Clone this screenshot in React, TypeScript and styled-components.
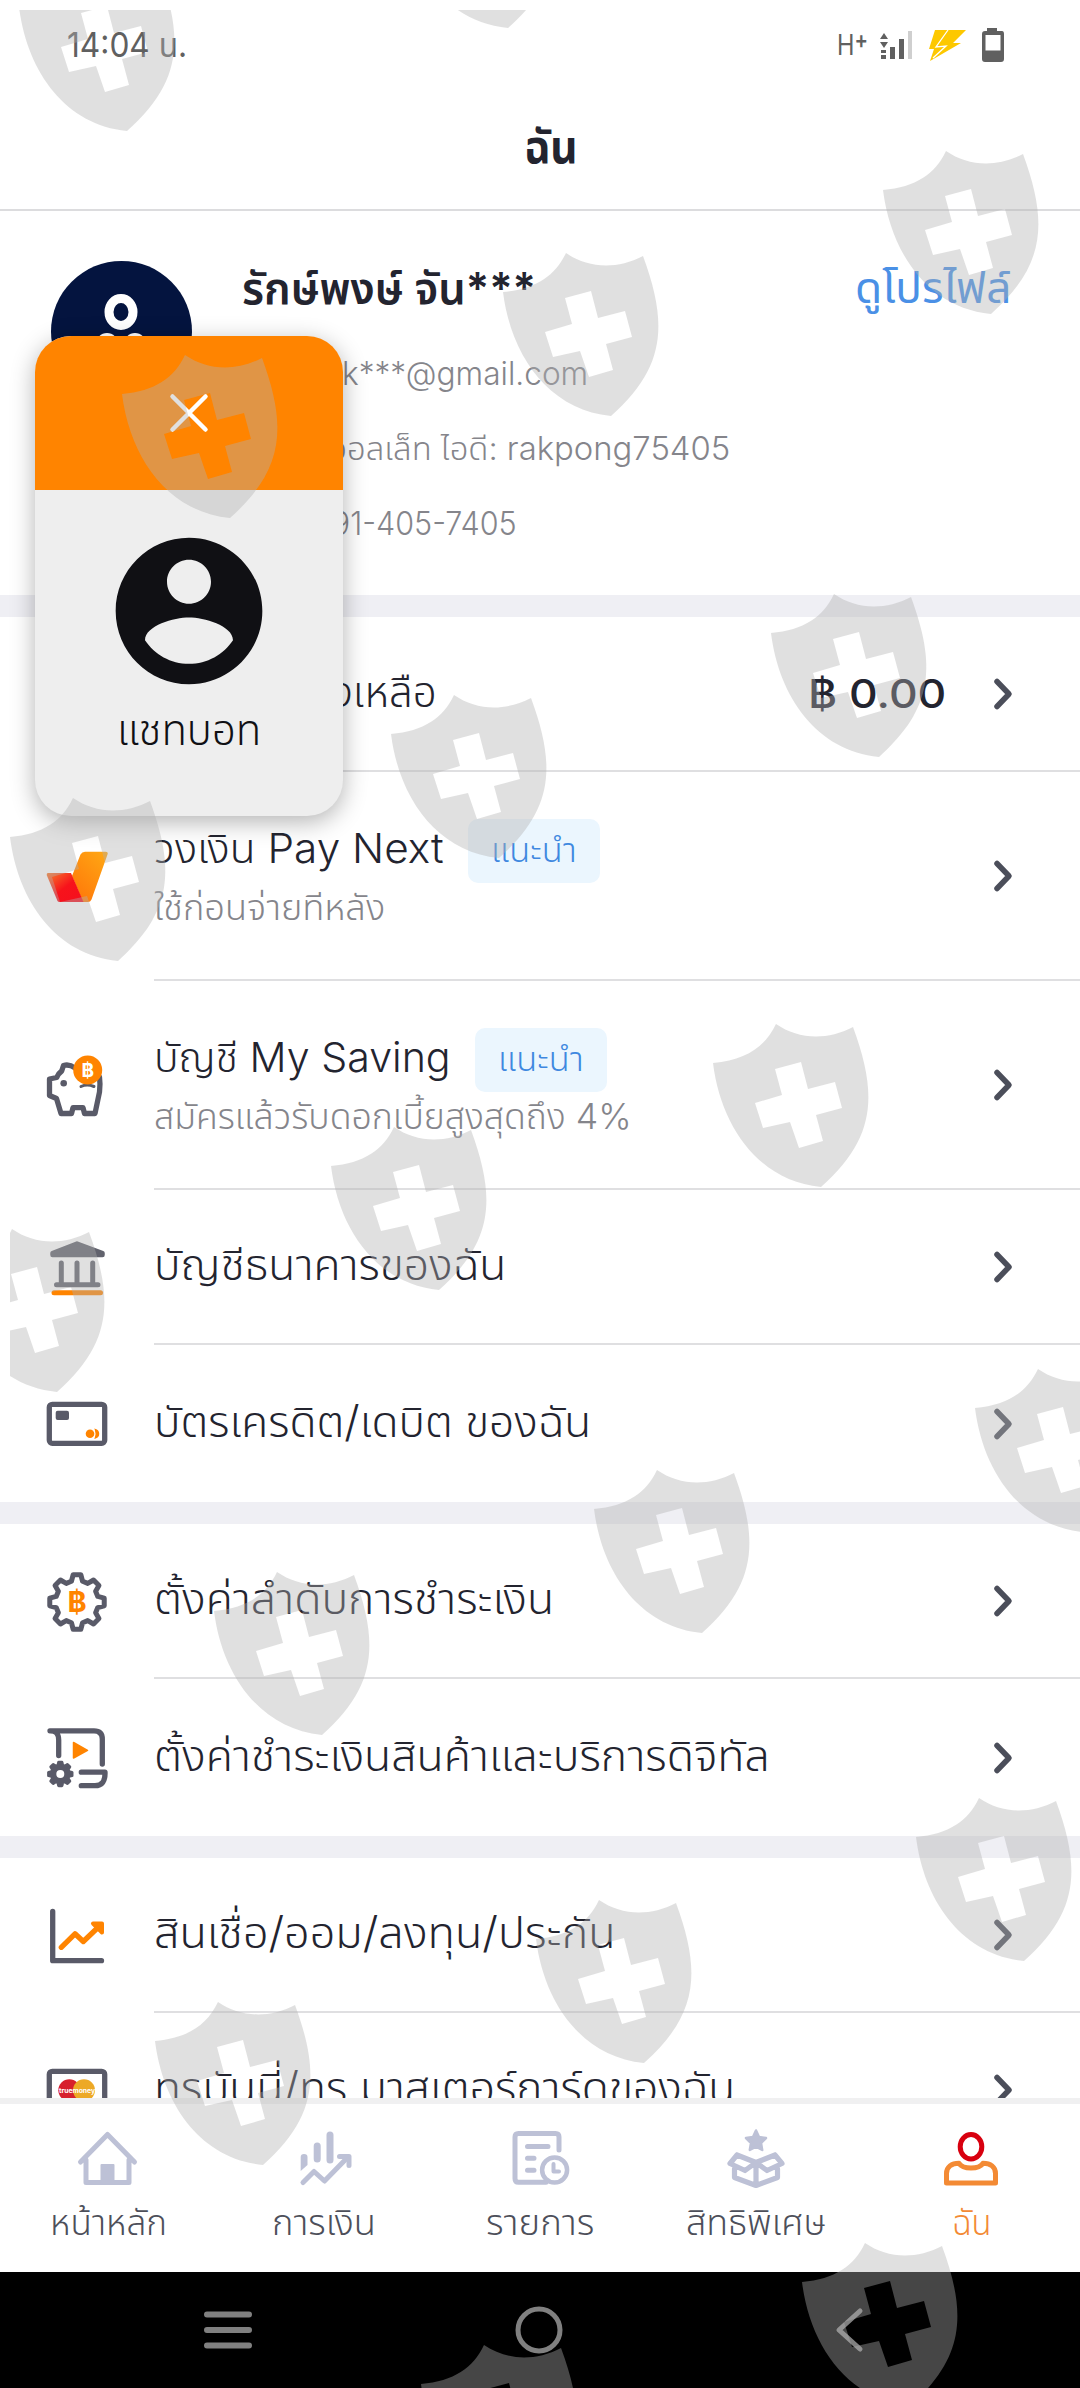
import React, { useLayoutEffect, useRef, useState } from "react";
import styled, { createGlobalStyle } from "styled-components";

const FONT = `Inter, "Noto Sans Thai", "Noto Sans", "Liberation Sans", sans-serif`;
const SLATE = "#595a68";
const ORANGE = "#ff8400";
const MUTED = "#bdc1d6";

const Global = createGlobalStyle`
  * { box-sizing: border-box; }
  body { margin: 0; background: #fff; font-family: ${FONT}; }
`;

const Screen = styled.div`
  position: relative;
  width: 1080px;
  height: 2388px;
  overflow: hidden;
  display: flex;
  flex-direction: column;
  background: #fff;
`;

/* ---------- text fitted to a fixed measure ---------- */

const FitBox = styled.span<{ $w: number; $size: number; $weight: number; $color: string }>`
  display: block;
  flex: none;
  width: ${(p) => p.$w}px;
  font-size: ${(p) => p.$size}px;
  font-weight: ${(p) => p.$weight};
  line-height: ${(p) => Math.round(p.$size * 1.4)}px;
  color: ${(p) => p.$color};
  white-space: nowrap;
`;

const FitInner = styled.span`
  display: inline-block;
  transform-origin: 0 50%;
`;

interface FitProps {
  w: number;
  size: number;
  weight?: number;
  color?: string;
  children: React.ReactNode;
}

function Fit({ w, size, weight = 300, color = "#23242f", children }: FitProps) {
  const ref = useRef<HTMLSpanElement>(null);
  const [scale, setScale] = useState(1);
  useLayoutEffect(() => {
    if (ref.current && ref.current.offsetWidth) setScale(w / ref.current.offsetWidth);
  }, [w, children]);
  return (
    <FitBox $w={w} $size={size} $weight={weight} $color={color}>
      <FitInner ref={ref} style={{ transform: `scaleX(${scale})` }}>
        {children}
      </FitInner>
    </FitBox>
  );
}

/* ---------- header ---------- */

const StatusBar = styled.div`
  flex: none;
  height: 90px;
  padding: 0 75px 0 67px;
  display: flex;
  justify-content: space-between;
  align-items: center;
`;

const StatusIcons = styled.div`
  display: flex;
  align-items: center;
  gap: 11px;
`;

const Plus = styled.span`
  font-size: 24px;
  font-weight: 600;
  line-height: 1;
  vertical-align: 7px;
`;

const TitleBar = styled.header`
  flex: none;
  height: 121px;
  padding: 0 0 8px 22px;
  border-bottom: 2px solid #dcdcde;
  display: flex;
  justify-content: center;
  align-items: center;
`;

const Profile = styled.section`
  flex: none;
  height: 384px;
  padding: 50px 69px 0 51px;
  display: flex;
`;

const Avatar = styled.svg`
  flex: none;
  width: 141px;
  height: 141px;
`;

const ProfileText = styled.div`
  flex: 1;
  margin-left: 50px;
  display: flex;
  flex-direction: column;
`;

const NameRow = styled.div`
  display: flex;
  justify-content: space-between;
  height: 94px;
  margin-top: -4px;
`;

const Detail = styled.div<{ $indent: number }>`
  height: 75px;
  padding-left: ${(p) => p.$indent}px;
`;

const Band = styled.div`
  flex: none;
  height: 22px;
  background: #efeff4;
`;

/* ---------- list ---------- */

const List = styled.main`
  flex: none;
  height: 1503px;
  overflow: hidden;
`;

const Row = styled.div<{ $h: number }>`
  height: ${(p) => p.$h}px;
  display: flex;
`;

const IconCell = styled.div`
  width: 154px;
  padding-left: 45px;
  display: flex;
  align-items: center;
  svg { width: 64px; height: 64px; }
`;

const RowBody = styled.div<{ $line: boolean }>`
  flex: 1;
  display: flex;
  align-items: center;
  padding-right: 64px;
  border-bottom: ${(p) => (p.$line ? "2px solid #dfdfe1" : "0")};
`;

const RowText = styled.div<{ $indent?: number }>`
  flex: 1;
  padding: 0 0 6px ${(p) => p.$indent ?? 0}px;
`;

const Heading = styled.div`
  display: flex;
  align-items: center;
  gap: 24px;
  height: 64px;
`;

const HeadingText = styled.div`
  padding-bottom: 5px;
`;

const Badge = styled.span`
  height: 64px;
  padding: 0 23px 2px;
  display: flex;
  align-items: center;
  border-radius: 10px;
  background: #ebf6fe;
`;

const TwoLine = styled.div`
  flex: 1;
  height: 114px;
`;

const Amount = styled.div`
  margin-right: 46px;
`;

const ChevronSvg = styled.svg`
  flex: none;
  width: 24px;
  height: 36px;
`;

const Chevron = () => (
  <ChevronSvg viewBox="0 0 24 36" fill="none" stroke="#4b4e5a" strokeWidth="5.5" strokeLinecap="round" strokeLinejoin="round">
    <path d="M5 5.5 17 18 5 30.5" />
  </ChevronSvg>
);

/* ---------- row icons ---------- */

const gearPath = (c: number, cy: number, outer: number, inner: number) => {
  const pts: string[] = [];
  for (let i = 0; i < 8; i++) {
    const base = (i * 45 * Math.PI) / 180;
    [[-8, outer], [8, outer], [15, inner], [30, inner]].forEach(([deg, r]) => {
      const a = base + (deg * Math.PI) / 180;
      pts.push(`${(c + r * Math.sin(a)).toFixed(2)} ${(cy - r * Math.cos(a)).toFixed(2)}`);
    });
  }
  return `M${pts.join("L")}Z`;
};

const PayNextIcon = () => (
  <svg viewBox="0 0 64 64">
    <defs>
      <linearGradient id="pn1" x1="0" y1="0" x2="1" y2="1">
        <stop offset="0" stopColor="#f77b2a" />
        <stop offset="0.5" stopColor="#f7131b" />
        <stop offset="1" stopColor="#f50f1e" />
      </linearGradient>
      <linearGradient id="pn2" x1="1" y1="0" x2="0.3" y2="1">
        <stop offset="0" stopColor="#ffa914" />
        <stop offset="1" stopColor="#ff7a0a" />
      </linearGradient>
    </defs>
    <path d="M40 6.700H60.500Q63.500 7 62.500 9.500L46.500 54.500Q45.300 57 43 57H38L27 31 35.500 9.500Q37 6.700 40 6.700Z" fill="url(#pn2)" />
    <path d="M3 28H26L38.500 57H14.500Q13 57 12.500 56L1.700 30Q1.500 28 3 28Z" fill="url(#pn1)" />
  </svg>
);

const PiggyIcon = () => (
  <svg viewBox="0 0 64 64" fill="none" stroke={SLATE} strokeWidth="5.300" strokeLinecap="round" strokeLinejoin="round">
    <path d="M30 14C26 11 22 10.500 18.500 11.500L16.700 17C14 19 13 20 11.700 23.500L4.500 25V41.500L11.500 44.500 16 59.500H26.500L28 53.700H38L39.500 59.500H50L54.500 38Q55.500 30 54.500 23" />
    <circle cx="18.700" cy="29.300" r="3.300" fill={SLATE} stroke="none" />
    <path d="M36 32.500Q42 29.500 49 32.500" strokeWidth="3" />
    <circle cx="42.700" cy="16" r="14.500" fill={ORANGE} stroke="none" />
    <text x="42.700" y="23" fontSize="19" fontWeight="700" textAnchor="middle" fill="#fff" stroke="none">฿</text>
  </svg>
);

const BankIcon = () => (
  <svg viewBox="0 0 64 64" fill="none" stroke="#61626d" strokeWidth="5" strokeLinecap="round" strokeLinejoin="round">
    <path d="M32 7.500 57.500 17V19H7.500V17Z" fill="#61626d" strokeWidth="4.500" />
    <path d="M16.300 27V46M32 27V46M47.700 27V46M11.500 48.700H53" />
    <path d="M9 56.700H55.500" stroke={ORANGE} />
  </svg>
);

const CardIcon = () => (
  <svg viewBox="0 0 64 64" fill="none">
    <rect x="4.300" y="12.300" width="55.400" height="39" rx="3" stroke={SLATE} strokeWidth="5.300" />
    <rect x="10.700" y="18.700" width="13.300" height="9.300" rx="2" fill={SLATE} />
    <circle cx="45" cy="41.700" r="4.300" fill={ORANGE} />
    <path d="M50.500 37.600A4.300 4.300 0 0 1 50.500 45.800Q52 41.700 50.500 37.600Z" fill={ORANGE} stroke={ORANGE} strokeWidth="1.500" />
  </svg>
);

const GearIcon = () => (
  <svg viewBox="0 0 64 64">
    <path d={gearPath(32, 32, 27.5, 21.5)} fill="none" stroke={SLATE} strokeWidth="5" strokeLinejoin="round" />
    <text x="32" y="42" fontSize="29" fontWeight="700" textAnchor="middle" fill={ORANGE}>฿</text>
  </svg>
);

const DigitalIcon = () => (
  <svg viewBox="0 0 64 64" fill="none" stroke={SLATE} strokeWidth="5.300" strokeLinecap="round" strokeLinejoin="round">
    <path d="M5 4.800H49Q57.300 4.800 57.300 13V38M5 4.800Q13.700 4.500 13.700 14V29.500" />
    <path d="M36.300 46.200H60Q60.500 59.700 50 59.700H36.300" />
    <path d="M28.500 16.500 42.500 24.300 28.500 32Z" fill={ORANGE} stroke={ORANGE} strokeWidth="1.500" />
    <path d={gearPath(15.3, 48, 11.8, 9)} fill={SLATE} strokeWidth="3" />
    <circle cx="15.300" cy="48" r="4" fill="#fff" stroke="none" />
  </svg>
);

const ChartIcon = () => (
  <svg viewBox="0 0 64 64" fill="none" stroke={SLATE} strokeWidth="5.300" strokeLinecap="round" strokeLinejoin="round">
    <path d="M7.700 7.500V56.700H56.500" />
    <path d="M16.300 43.300 30 29.800 38.300 37.500 54 22.500" stroke={ORANGE} />
    <path d="M48 19.500H57V28.500Z" fill={ORANGE} stroke={ORANGE} strokeWidth="4" />
  </svg>
);

const MasterIcon = () => (
  <svg viewBox="0 0 64 64" fill="none">
    <rect x="4.300" y="12.300" width="55.400" height="39" rx="3" stroke={SLATE} strokeWidth="5.300" />
    <circle cx="24.300" cy="31.300" r="11" fill="#d7202c" />
    <circle cx="39" cy="31.300" r="11" fill="#eda926" />
    <text x="32" y="34" fontSize="6.800" fontWeight="700" textAnchor="middle" fill="#fff">truemoney</text>
  </svg>
);

/* ---------- tab bar ---------- */

const TabBar = styled.nav`
  flex: none;
  height: 174px;
  border-top: 6px solid #f0f0f1;
  display: grid;
  grid-template-columns: repeat(5, 216px);
`;

const Tab = styled.div`
  padding-top: 22px;
  display: flex;
  flex-direction: column;
  align-items: center;
  gap: 7px;
  svg { width: 64px; height: 64px; fill: none; stroke: ${MUTED}; stroke-width: 5; stroke-linecap: round; stroke-linejoin: round; }
`;

const HomeIcon = () => (
  <svg viewBox="0 0 64 64">
    <path d="M4.500 36 31.500 8.500 58.500 36M10 34V56.500H53V34" strokeWidth="5" />
    <rect x="25.500" y="39" width="12" height="17" fill={MUTED} strokeWidth="2" />
  </svg>
);

const FinanceIcon = () => (
  <svg viewBox="0 0 64 64">
    <path d="M25.200 20V33M38 9V34" strokeWidth="7" />
    <path d="M8.700 45V31Q8.700 28 12 28Q15.500 28 15.500 31V39Z" fill={MUTED} stroke="none" />
    <path d="M11 56.500 22 45.500 32.500 55 55 32" />
    <path d="M47.500 30.500H57V39.500" />
  </svg>
);

const HistoryIcon = () => (
  <svg viewBox="0 0 64 64">
    <path d="M51 24V11Q51 7.500 47.500 7.500H10.500Q7 7.500 7 11V52.500Q7 56.300 10.500 56.300H38" />
    <path d="M19.500 20.500H40M19.500 32.300H26M19.500 44.300H26" />
    <circle cx="46.600" cy="44" r="12.500" fill="#fff" strokeWidth="4.500" />
    <path d="M45.500 38V45.500H51" strokeWidth="4" />
  </svg>
);

const GiftIcon = () => (
  <svg viewBox="0 0 64 64">
    <path d="M32 4.500 35 11 42 12 37 17 38.200 24 32 20.700 25.800 24 27 17 22 12 29 11Z" fill={MUTED} strokeWidth="2.500" />
    <path d="M13 29 6 37.500 21 44.500 32 36.500 43 44.500 58 37.500 51 29M13 29 32 36.500 51 29M10.500 43V51.500L32 59.500 53.500 51.500V43M32 38V59" strokeWidth="5.200" />
  </svg>
);

const MeIcon = () => (
  <svg viewBox="0 0 64 64">
    <ellipse cx="31" cy="20.700" rx="10.800" ry="12.200" stroke="#d8000f" />
    <path d="M6.500 57V47.500C6.500 41 11.500 37.300 19 37.300C23 43.500 39 43.500 43 37.300C50.500 37.300 55.500 41 55.500 47.500V57Z" stroke="#f38a34" />
  </svg>
);

/* ---------- system navigation ---------- */

const SystemNav = styled.div`
  flex: none;
  height: 116px;
  background: #000;
  display: flex;
  align-items: center;
  justify-content: space-between;
  padding: 0 206px 0 204px;
  svg { width: 48px; height: 48px; fill: none; stroke: #808080; stroke-width: 5; stroke-linecap: round; stroke-linejoin: round; }
`;

/* ---------- floating chat card ---------- */

const ChatCard = styled.aside`
  position: absolute;
  left: 35px;
  top: 336px;
  width: 308px;
  height: 480px;
  border-radius: 36px;
  overflow: hidden;
  background: #eee;
  box-shadow: 0 6px 24px rgba(0, 0, 0, 0.3);
  display: flex;
  flex-direction: column;
`;

const ChatHead = styled.div`
  height: 154px;
  background: ${ORANGE};
  display: flex;
  align-items: center;
  justify-content: center;
`;

const ChatBody = styled.div`
  flex: 1;
  padding-top: 33px;
  display: flex;
  flex-direction: column;
  align-items: center;
`;

/* ---------- shield overlay ---------- */

const Overlay = styled.svg`
  position: absolute;
  left: 10px;
  top: 10px;
  width: 1070px;
  height: 2378px;
  pointer-events: none;
`;

const SHIELD =
  "M0 40C33 37 52 24 63 1C85 16 113 18 140 4C165 72 163 115 108 164C46 158 8 104 0 40Z" +
  "M62 46 88 39 95 66 122 59 129 85 103 92 110 118 86 125 77 99 50 105 42 80 69 72Z";

const SHIELD_TIPS: [number, number][] = [
  [127, 131], [508, 28], [991, 314], [611, 416], [230, 518], [879, 757], [499, 858], [118, 961],
  [821, 1187], [439, 1290], [57, 1392], [1083, 1532], [702, 1633], [322, 1735], [1024, 1961],
  [644, 2063], [263, 2165], [910, 2406], [529, 2508],
];

const GREY = "#85858b";

interface SimpleRow {
  icon: React.ReactNode;
  text: string;
  w: number;
  h: number;
  line: boolean;
}

const LineRow = ({ icon, text, w, h, line }: SimpleRow) => (
  <Row $h={h}>
    <IconCell>{icon}</IconCell>
    <RowBody $line={line}>
      <RowText><Fit w={w} size={43}>{text}</Fit></RowText>
      <Chevron />
    </RowBody>
  </Row>
);

interface PromoRow {
  icon: React.ReactNode;
  title: string;
  tw: number;
  sub: string;
  sw: number;
  h: number;
}

const PromoLine = ({ icon, title, tw, sub, sw, h }: PromoRow) => (
  <Row $h={h}>
    <IconCell>{icon}</IconCell>
    <RowBody $line>
      <TwoLine>
        <Heading>
          <HeadingText><Fit w={tw} size={41}>{title}</Fit></HeadingText>
          <Badge><Fit w={86} size={34} color="#3f88e0">แนะนำ</Fit></Badge>
        </Heading>
        <Fit w={sw} size={35} color={GREY}>{sub}</Fit>
      </TwoLine>
      <Chevron />
    </RowBody>
  </Row>
);

const TABS = [
  { icon: <HomeIcon />, label: "หน้าหลัก", w: 117, color: "#4d4f5a" },
  { icon: <FinanceIcon />, label: "การเงิน", w: 104, color: "#4d4f5a" },
  { icon: <HistoryIcon />, label: "รายการ", w: 108, color: "#4d4f5a" },
  { icon: <GiftIcon />, label: "สิทธิพิเศษ", w: 140, color: "#4d4f5a" },
  { icon: <MeIcon />, label: "ฉัน", w: 40, color: "#f38a34" },
];

export default function App() {
  return (
    <Screen>
      <Global />
      <StatusBar>
        <Fit w={120} size={34} weight={400} color="#606060">14:04 น.</Fit>
        <StatusIcons>
          <Fit w={31} size={28} weight={400} color="#606060">H<Plus>+</Plus></Fit>
          <svg width="36" height="34" viewBox="0 0 36 34" fill="#606060">
            <path d="M1 11 5 5 9 11ZM1 14H9L5 20Z" />
            <path d="M2 22H7V25H2ZM2 27H7V31H2ZM11 19H16V31H11ZM20 11H25V31H20Z" />
            <path d="M29 3H33V31H29Z" fill="#cfcfcf" />
          </svg>
          <svg width="42" height="36" viewBox="0 0 42 36">
            <path d="M9 3H40L27 16H35L4 34 8 22H3Z" fill="#fdc800" />
            <path d="M22 3 10 20 20 19 7 31" stroke="#fff" strokeWidth="1.300" fill="none" />
          </svg>
          <svg width="26" height="38" viewBox="0 0 26 38">
            <path d="M8 2H18V5H23Q25 5 25 8V33Q25 36 22 36H6Q3 36 3 33V8Q3 5 6 5H8Z" fill="#606060" />
            <path d="M6.500 9H21.500V24.500H6.500Z" fill="#fff" />
          </svg>
        </StatusIcons>
      </StatusBar>

      <TitleBar><Fit w={54} size={47} weight={700}>ฉัน</Fit></TitleBar>

      <Profile>
        <Avatar viewBox="0 0 141 141">
          <circle cx="70.500" cy="70.500" r="70.500" fill="#04143f" />
          <ellipse cx="70" cy="51" rx="12" ry="13.500" fill="none" stroke="#fff" strokeWidth="9" />
          <circle cx="56" cy="83" r="11" fill="#fff" />
          <circle cx="84" cy="83" r="11" fill="#fff" />
        </Avatar>
        <ProfileText>
          <NameRow>
            <Fit w={294} size={44} weight={600}>รักษ์พงษ์ จัน***</Fit>
            <Fit w={156} size={43} weight={400} color="#4a90e6">ดูโปรไฟล์</Fit>
          </NameRow>
          <Detail $indent={100}><Fit w={246} size={32} color={GREY}>k***@gmail.com</Fit></Detail>
          <Detail $indent={89}><Fit w={399} size={32} color={GREY}>วอลเล็ท ไอดี: rakpong75405</Fit></Detail>
          <Detail $indent={71}><Fit w={204} size={32} color={GREY}>091-405-7405</Fit></Detail>
        </ProfileText>
      </Profile>

      <List>
        <Band />
        <Row $h={155}>
          <IconCell />
          <RowBody $line>
            <RowText $indent={151}><Fit w={132} size={43}>คงเหลือ</Fit></RowText>
            <Amount><Fit w={138} size={39} weight={500}>฿ 0.00</Fit></Amount>
            <Chevron />
          </RowBody>
        </Row>
        <PromoLine icon={<PayNextIcon />} title="วงเงิน Pay Next" tw={290} sub="ใช้ก่อนจ่ายทีหลัง" sw={231} h={209} />
        <PromoLine icon={<PiggyIcon />} title="บัญชี My Saving" tw={297} sub="สมัครแล้วรับดอกเบี้ยสูงสุดถึง 4%" sw={478} h={209} />
        <LineRow icon={<BankIcon />} text="บัญชีธนาคารของฉัน" w={352} h={155} line />
        <LineRow icon={<CardIcon />} text="บัตรเครดิต/เดบิต ของฉัน" w={437} h={157} line={false} />
        <Band />
        <LineRow icon={<GearIcon />} text="ตั้งค่าลำดับการชำระเงิน" w={400} h={155} line />
        <LineRow icon={<DigitalIcon />} text="ตั้งค่าชำระเงินสินค้าและบริการดิจิทัล" w={616} h={157} line={false} />
        <Band />
        <LineRow icon={<ChartIcon />} text="สินเชื่อ/ออม/ลงทุน/ประกัน" w={462} h={155} line />
        <LineRow icon={<MasterIcon />} text="ทรูมันนี่/ทรู มาสเตอร์การ์ดของฉัน" w={581} h={155} line />
      </List>

      <TabBar>
        {TABS.map((t) => (
          <Tab key={t.label}>
            {t.icon}
            <Fit w={t.w} size={36} color={t.color}>{t.label}</Fit>
          </Tab>
        ))}
      </TabBar>

      <SystemNav>
        <svg viewBox="0 0 48 48"><path d="M3 8.500H45M3 24H45M3 39.500H45" strokeWidth="6" /></svg>
        <svg viewBox="0 0 48 48"><circle cx="24" cy="24" r="21" /></svg>
        <svg viewBox="0 0 48 48"><path d="M34 5 13 24 34 43" /></svg>
      </SystemNav>

      <ChatCard>
        <ChatHead>
          <svg width="40" height="40" viewBox="0 0 40 40" stroke="#fff" strokeWidth="4.500" strokeLinecap="round">
            <path d="M3.500 3.500 36.500 36.500M36.500 3.500 3.500 36.500" />
          </svg>
        </ChatHead>
        <ChatBody>
          <svg width="176" height="176" viewBox="0 0 24 24" fill="#101014">
            <path d="M12 2C6.480 2 2 6.480 2 12s4.480 10 10 10 10-4.480 10-10S17.520 2 12 2zm0 3c1.660 0 3 1.340 3 3s-1.340 3-3 3-3-1.340-3-3 1.340-3 3-3zm0 14.200c-2.500 0-4.710-1.280-6-3.220.030-1.990 4-3.080 6-3.080 1.990 0 5.970 1.090 6 3.080-1.290 1.940-3.500 3.220-6 3.220z" />
          </svg>
          <Fit w={144} size={43} color="#101014">แชทบอท</Fit>
        </ChatBody>
      </ChatCard>

      <Overlay viewBox="10 10 1070 2378">
        {SHIELD_TIPS.map(([x, y]) => (
          <path key={`${x}-${y}`} d={SHIELD} transform={`translate(${x - 108} ${y - 164})`} fill="#b1b1b1" fillOpacity="0.396" fillRule="evenodd" />
        ))}
      </Overlay>
    </Screen>
  );
}
